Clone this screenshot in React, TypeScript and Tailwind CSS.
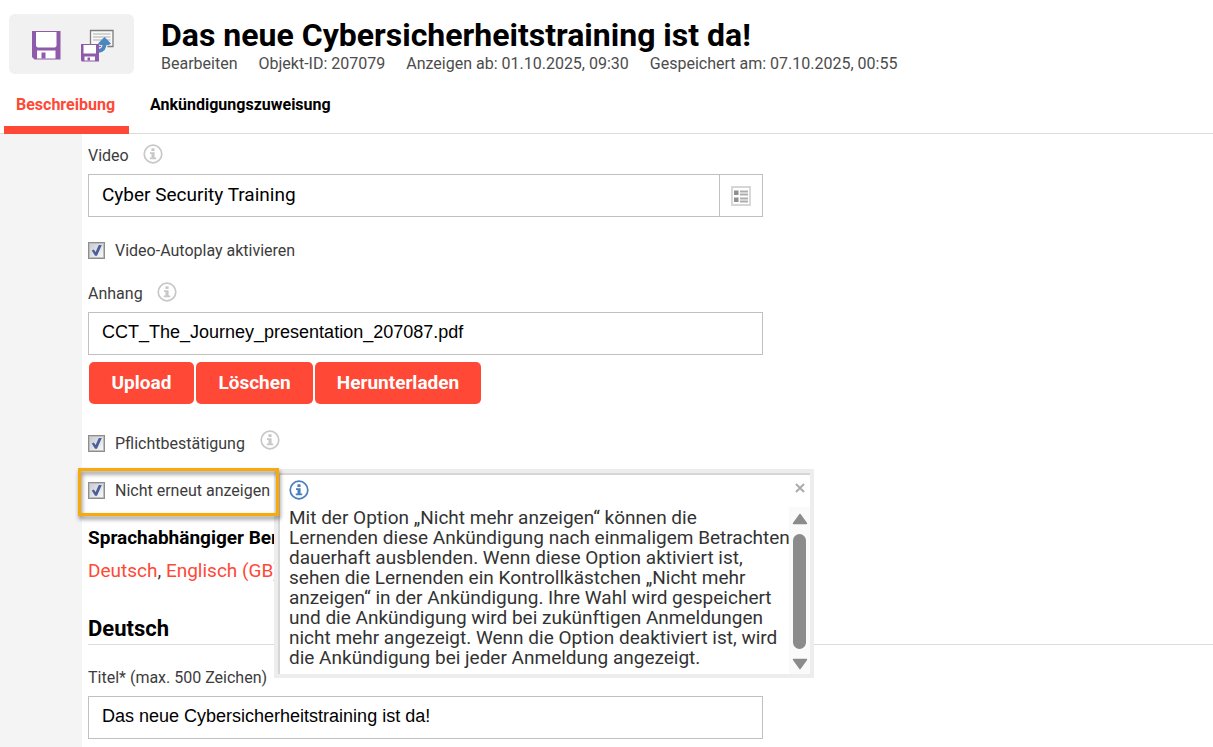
import React, { useState } from "react";

const InfoIcon = ({ active = false }: { active?: boolean }) => (
  <svg className={`h-5 w-5 shrink-0 ${active ? "text-[#4a7fbd]" : "text-[#c8c8c8]"}`} viewBox="0 0 20 20" fill="none" aria-hidden="true">
    <circle cx="10" cy="10" r="8.8" stroke="currentColor" strokeWidth="1.7" />
    <rect x="8.400" y="4.200" width="3.200" height="2.800" rx=".6" fill="currentColor" />
    <path d="M7 8.200h4.600v5.200h1.600v1.800H6.800v-1.800h1.700V10H7z" fill="currentColor" />
  </svg>
);

const SaveIcon = () => (
  <svg className="h-[30px] w-[30px]" viewBox="0 0 30 30" aria-hidden="true">
    <path d="M1 1h28.500v28.500H3.500L1 27z" fill="#8e5bab" />
    <path d="M5 2h20.500v14L24 17.500H6.500L5 16z" fill="#fff" />
    <path d="M6 20.500h18.500v8H6z" fill="#fff" />
    <path d="M10.500 22.500h4v6h-4z" fill="#8e5bab" />
  </svg>
);

const SaveCloseIcon = () => (
  <svg className="h-[33px] w-[34px]" viewBox="0 0 34 33" aria-hidden="true">
    <path d="M10.500 1.500h22.500v16H10.500z" fill="#f8f8f8" stroke="#7d7d7d" strokeWidth="1.300" />
    <path d="M13 5h17.500M13 8h17.500M13 11h17.500" stroke="#c6c6c6" strokeWidth="1.300" />
    <path d="M18 22.500c5.500-.5 7-4 6.500-9" fill="none" stroke="#f5f5f5" strokeWidth="6" />
    <path d="M18 22c5.500-.5 7-3.500 6.500-9" fill="none" stroke="#4c86bf" strokeWidth="4" />
    <path d="M24.500 8L31 14.500l-2 1.500h-9l-2-1.500z" fill="#4c86bf" />
    <path d="M1 15h18v17.500H2l-1-1z" fill="#8e5bab" />
    <path d="M3.500 16H16v8.500H3.500z" fill="#fff" />
    <path d="M4.500 27.500h10.500v4H4.500z" fill="#fff" />
    <path d="M7.500 28.500h2.500v3H7.500z" fill="#8e5bab" />
  </svg>
);

const ListIcon = () => (
  <svg className="h-5 w-5" viewBox="0 0 20 20" fill="none" aria-hidden="true">
    <path d="M1 1h18v18H1z" stroke="#d6d6d6" strokeWidth="1.800" />
    <path d="M3 4.500h4.500v4.500H3zM3 11.500h4.500V16H3z" fill="#909090" />
    <path d="M9 5.500h8M9 8.500h8M9 12.500h8M9 15.500h8" stroke="#adadad" strokeWidth="1.800" />
  </svg>
);

type CheckRowProps = { id: string; label: string };

const CheckRow = ({ id, label }: CheckRowProps) => {
  const [checked, setChecked] = useState(true);

  return (
    <div className="flex h-[21px] items-center gap-[10px]">
      <span className="relative h-[17px] w-[17px]">
        <input
          id={id}
          type="checkbox"
          checked={checked}
          onChange={(e) => setChecked(e.target.checked)}
          className="block h-[17px] w-[17px] appearance-none border border-[#8e8e8e] bg-linear-to-br from-[#c8cad0] to-[#fafafa] inset-ring inset-ring-[#bdbdbd]"
        />
        {checked && (
          <svg className="pointer-events-none absolute inset-0" viewBox="0 0 17 17" aria-hidden="true">
            <path d="M3.800 8.500l2-1 1.800 2.500L10.800 3h3L9 13.800H7z" fill="#4a5f9c" />
          </svg>
        )}
      </span>
      <label htmlFor={id} className="leading-[21px]">{label}</label>
    </div>
  );
};

const buttonStyle = "h-[42px] rounded-[5px] bg-[#ff4836] text-[19px] font-bold text-white";
const inputStyle = "h-[43px] w-full max-w-[675px] border border-[#c0c0c0] px-[13px] pb-[2px] font-['Liberation_Sans',sans-serif] text-[18px] text-black";

export default function App() {
  const [hintOpen, setHintOpen] = useState(true);

  return (
    <div className="flex min-h-screen flex-col overflow-hidden bg-white font-['Roboto',sans-serif] text-[16px] leading-5 text-[#3c3c3c]">
      <header className="flex gap-[27px] pt-[14px] pl-[9px]">
        <div className="flex h-[60px] w-[125px] items-center gap-[19px] rounded-md bg-[#f1f1f1] pt-[2px] pl-[22px]">
          <button type="button" aria-label="Speichern"><SaveIcon /></button>
          <button type="button" aria-label="Speichern und schließen"><SaveCloseIcon /></button>
        </div>
        <div className="pt-[2px]">
          <h1 className="text-[32px] leading-[38px] font-bold text-black">Das neue Cybersicherheitstraining ist da!</h1>
          <div className="flex gap-[21px] text-[#4c4c4c]">
            <span>Bearbeiten</span>
            <span>Objekt-ID: 207079</span>
            <span>Anzeigen ab: 01.10.2025, 09:30</span>
            <span>Gespeichert am: 07.10.2025, 00:55</span>
          </div>
        </div>
      </header>

      <nav className="flex h-[60px] gap-[9px] border-b border-[#dcdcdc] pl-1 font-bold">
        <a href="#beschreibung" className="flex h-[60px] border-b-8 border-[#ff4836] pt-[21px] pr-[14px] pl-3 text-[#ff4836]">Beschreibung</a>
        <a href="#zuweisung" className="pt-[21px] pr-[14px] pl-3 text-black">Ankündigungszuweisung</a>
      </nav>

      <div className="flex flex-1">
        <div className="w-[82px] shrink-0 bg-[#f4f4f4]" />
        <main className="min-w-0 flex-1 pt-[10px] pb-2 pl-[6px]">
          <div className="flex h-[22px] gap-[14px]">
            <label htmlFor="video" className="pt-[2px]">Video</label>
            <InfoIcon />
          </div>
          <div className="mt-2 flex h-[43px] max-w-[675px] border border-[#c0c0c0]">
            <input id="video" defaultValue="Cyber Security Training" className="min-w-0 flex-1 px-[13px] pb-[2px] text-[19px] text-black" />
            <button type="button" aria-label="Auswählen" className="flex w-[43px] items-center justify-center border-l border-[#c0c0c0]"><ListIcon /></button>
          </div>
          <div className="mt-[23px]">
            <CheckRow id="autoplay" label="Video-Autoplay aktivieren" />
          </div>

          <div className="mt-[21px] flex h-[22px] gap-[14px]">
            <label htmlFor="anhang" className="pt-[2px]">Anhang</label>
            <InfoIcon />
          </div>
          <input id="anhang" defaultValue="CCT_The_Journey_presentation_207087.pdf" className={`mt-2 block ${inputStyle}`} />
          <div className="mt-[7px] ml-[1px] flex gap-[2px]">
            <button type="button" className={`w-[105px] ${buttonStyle}`}>Upload</button>
            <button type="button" className={`w-[117px] ${buttonStyle}`}>Löschen</button>
            <button type="button" className={`w-[166px] ${buttonStyle}`}>Herunterladen</button>
          </div>

          <div className="mt-[26px] flex items-end gap-[15px]">
            <CheckRow id="pflicht" label="Pflichtbestätigung" />
            <div className="pb-1"><InfoIcon /></div>
          </div>
          <div className="relative mt-[26px]">
            <CheckRow id="ausblenden" label="Nicht erneut anzeigen" />
            {hintOpen && (
              <section className="absolute -top-[11px] left-[186px] z-10 h-[209px] w-[540px] border-4 border-[#ededed] bg-white">
                <div className="flex h-full border-t-2 border-l-2 border-[#d6d6d6] pl-[9px]">
                  <div className="min-w-0 flex-1 pt-[5px]">
                    <InfoIcon active />
                    <p className="pt-2 text-[19px] leading-[20px] whitespace-nowrap text-[#333]">
                      Mit der Option „Nicht mehr anzeigen“ können die<br />
                      Lernenden diese Ankündigung nach einmaligem Betrachten<br />
                      dauerhaft ausblenden. Wenn diese Option aktiviert ist,<br />
                      sehen die Lernenden ein Kontrollkästchen „Nicht mehr<br />
                      anzeigen“ in der Ankündigung. Ihre Wahl wird gespeichert<br />
                      und die Ankündigung wird bei zukünftigen Anmeldungen<br />
                      nicht mehr angezeigt. Wenn die Option deaktiviert ist, wird<br />
                      die Ankündigung bei jeder Anmeldung angezeigt.
                    </p>
                  </div>
                  <div className="flex w-[21px] flex-col items-center">
                    <button type="button" aria-label="Schließen" onClick={() => setHintOpen(false)} className="flex h-[32px] items-start pt-2">
                      <svg className="h-[10px] w-[10px]" viewBox="0 0 10 10" aria-hidden="true">
                        <path d="M1 1l8 8M9 1L1 9" stroke="#aaa" strokeWidth="2" />
                      </svg>
                    </button>
                    <div className="flex w-full flex-1 flex-col items-center gap-[9px] bg-[#fafafa] pt-[6px] pb-1">
                      <svg className="h-3 w-4" viewBox="0 0 16 12" aria-hidden="true"><path d="M8 1.500L14.500 10.500h-13z" fill="#8b8b8b" stroke="#8b8b8b" strokeWidth="1.500" strokeLinejoin="round" /></svg>
                      <div className="w-[13px] flex-1 rounded-full bg-[#8b8b8b]" />
                      <svg className="h-3 w-4" viewBox="0 0 16 12" aria-hidden="true"><path d="M8 10.500L14.500 1.500h-13z" fill="#8b8b8b" stroke="#8b8b8b" strokeWidth="1.500" strokeLinejoin="round" /></svg>
                    </div>
                  </div>
                </div>
              </section>
            )}
            <div className="pointer-events-none absolute -top-[12px] -left-[10px] z-20 h-[48px] w-[201px] border-[3px] border-[#f9aa0b] drop-shadow-[1px_3px_2px_rgba(0,0,0,0.5)]" />
          </div>

          <h2 className="mt-[27px] text-[19px] font-bold text-black">Sprachabhängiger Bereich</h2>
          <p className="mt-3 text-[19px] leading-[22px]">
            <a href="#deutsch" className="text-[#ff4836]">Deutsch</a>, <a href="#englisch" className="text-[#ff4836]">Englisch (GB)</a>
          </p>
          <h2 id="deutsch" className="mt-[34px] border-b border-[#dcdcdc] pb-[2px] text-[22px] leading-[26px] font-bold text-black">Deutsch</h2>
          <label htmlFor="titel" className="mt-[23px] block">Titel* (max. 500 Zeichen)</label>
          <input id="titel" defaultValue="Das neue Cybersicherheitstraining ist da!" className={`mt-2 block ${inputStyle}`} />
        </main>
      </div>
    </div>
  );
}
